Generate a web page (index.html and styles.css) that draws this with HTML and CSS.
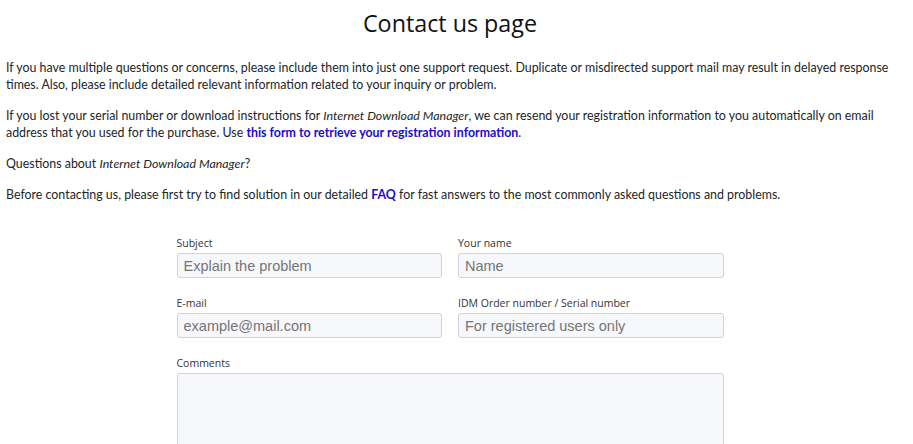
FILE: index.html
```html
<!DOCTYPE html>
<html lang="en">
<head>
    <meta charset="UTF-8">
    <meta name="viewport" content="width=device-width, initial-scale=1.0">
    <title>Contact us page</title>
    <link rel="stylesheet" href="styles.css">
</head>
<body>

<div class="page">
    <h1>Contact us page</h1>

    <p>If you have multiple questions or concerns, please include them into just one support request. Duplicate or misdirected support mail may result in delayed response times. Also, please include detailed relevant information related to your inquiry or problem.</p>

    <p>If you lost your serial number or download instructions for <i>Internet Download Manager</i>, we can resend your registration information to you automatically on email address that you used for the purchase. Use <a href="#">this form to retrieve your registration information</a>.</p>

    <p>Questions about <i>Internet Download Manager</i>?</p>

    <p>Before contacting us, please first try to find solution in our detailed <a href="#">FAQ</a> for fast answers to the most commonly asked questions and problems.</p>

    <form class="contact-form">
        <div class="field">
            <label>Subject</label>
            <input type="text" placeholder="Explain the problem">
        </div>
        <div class="field">
            <label>Your name</label>
            <input type="text" placeholder="Name">
        </div>
        <div class="field">
            <label>E-mail</label>
            <input type="text" placeholder="example@mail.com">
        </div>
        <div class="field">
            <label>IDM Order number / Serial number</label>
            <input type="text" placeholder="For registered users only">
        </div>
        <div class="field wide">
            <label>Comments</label>
            <textarea rows="8"></textarea>
        </div>
    </form>
</div>

</body>
</html>
```

FILE: styles.css
```css
body { margin: 0; font-family: "Open Sans", "Noto Sans", sans-serif; color: #212529; background: #fff; }
.page { width: 888px; padding: 0 6px; }
h1 { margin: 8px 0 21px; text-align: center; font-size: 23.3px; font-weight: 400; line-height: 30px; color: #111; }
p { margin: 0 0 14px; font-family: Lato, sans-serif; font-size: 12.4px; line-height: 17px; }
a { color: #1a0dcc; font-weight: 700; text-decoration: none; }
.contact-form { width: 547px; margin: 33px auto 0; display: grid; grid-template-columns: 1fr 1fr; column-gap: 16px; row-gap: 18px; }
.field label { display: block; font-size: 10.5px; line-height: 14px; margin-bottom: 3px; color: #333; }
.field input, .field textarea { box-sizing: border-box; width: 100%; height: 25px; padding: 2px 6px; border: 1px solid #d0d3d8; border-radius: 3px; background: #f7f8fc; font-family: "Liberation Sans", Arial, sans-serif; font-size: 14.5px; color: #333; }
.field input::placeholder { color: #757575; }
.field.wide { grid-column: 1 / 3; }
.field textarea { height: 110px; resize: none; }
```
